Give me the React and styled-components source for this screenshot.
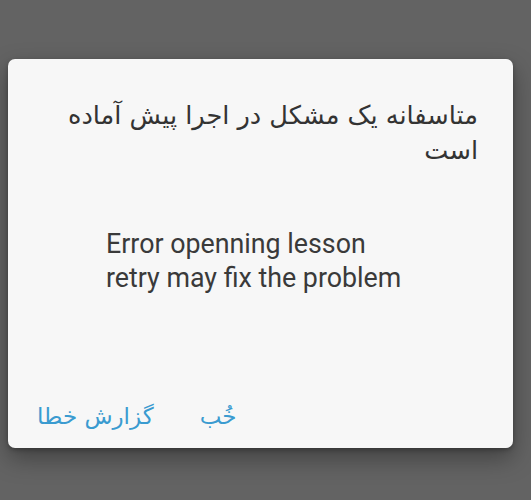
import React from "react";
import styled, { createGlobalStyle } from "styled-components";

const Global = createGlobalStyle`
  html, body { margin: 0; padding: 0; background: #636363; }
  #root { width: 531px; height: 500px; }
`;

const Overlay = styled.div`
  width: 531px;
  height: 500px;
  background: #636363;
  padding: 59px 18px 0 8px;
  box-sizing: border-box;
`;

const Dialog = styled.div`
  width: 505px;
  height: 389px;
  background: #f7f7f7;
  border-radius: 7px;
  box-shadow: 0 10px 24px rgba(0, 0, 0, 0.35), 0 2px 4px rgba(0, 0, 0, 0.25);
  box-sizing: border-box;
  display: flex;
  flex-direction: column;
`;

const Title = styled.h1`
  margin: 0;
  padding: 39px 35px 0 50px;
  direction: rtl;
  text-align: right;
  font-family: "DejaVu Sans", "Noto Sans", sans-serif;
  font-weight: normal;
  font-size: 25.6px;
  line-height: 35px;
  color: #333333;
`;

const Message = styled.p`
  margin: 0;
  padding: 59px 20px 0 98px;
  font-family: Roboto, "Liberation Sans", sans-serif;
  font-size: 26.8px;
  line-height: 34px;
  color: #3a3a3a;
  white-space: pre-line;
`;

const Actions = styled.div`
  margin-top: auto;
  display: flex;
  align-items: center;
  gap: 46px;
  padding: 0 0 15px 29px;
  direction: ltr;
`;

const ActionButton = styled.button`
  border: none;
  background: transparent;
  padding: 0;
  margin: 0;
  direction: rtl;
  font-family: "DejaVu Sans", "Noto Sans", sans-serif;
  font-size: 23px;
  line-height: 34px;
  color: #3a9bd0;
  cursor: pointer;
`;

export default function App() {
  return (
    <>
      <Global />
      <Overlay>
        <Dialog>
          <Title>متاسفانه یک مشکل در اجرا پیش آماده است</Title>
          <Message>{"Error openning lesson\nretry may fix the problem"}</Message>
          <Actions>
            <ActionButton>گزارش خطا</ActionButton>
            <ActionButton>خُب</ActionButton>
          </Actions>
        </Dialog>
      </Overlay>
    </>
  );
}
